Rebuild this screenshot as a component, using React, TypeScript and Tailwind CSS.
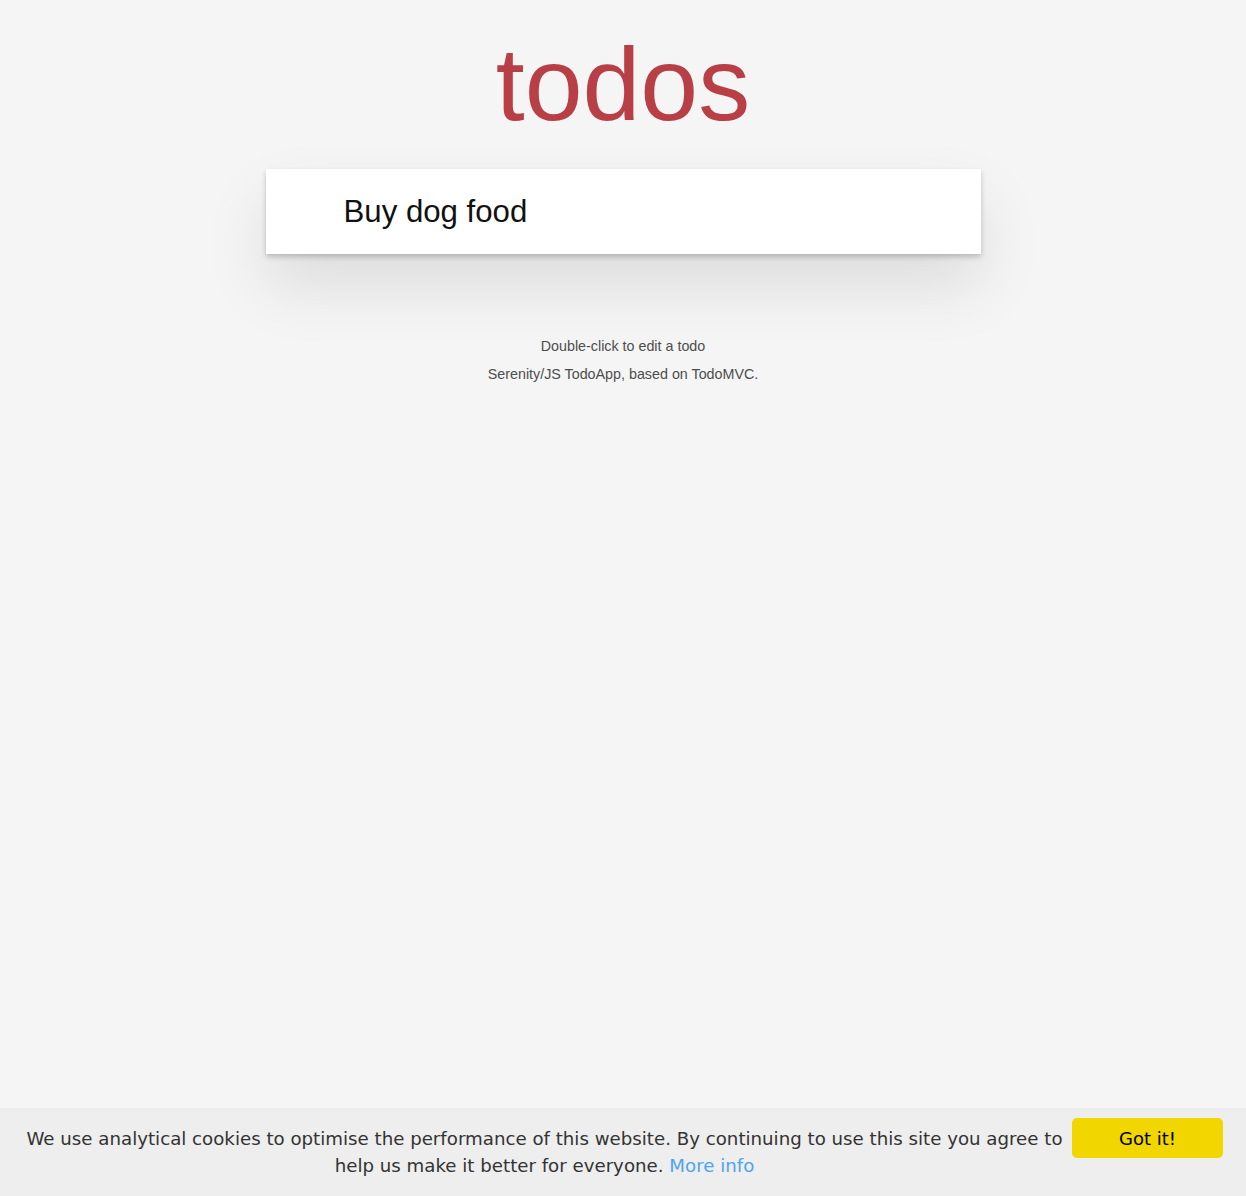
export default function App() {
  return (
    <div className="min-h-screen bg-[#f5f5f5] text-[#111111] font-['Liberation_Sans',Arial,sans-serif]">
      {/* Header */}
      <h1 className="pt-[32px] text-center text-[104px] leading-none font-normal text-[#b83f45]">todos</h1>

      {/* Todo app card */}
      <section className="mx-auto mt-[33px] w-[715px] bg-white shadow-[0_2.6px_5.2px_rgba(0,0,0,0.2),0_32px_65px_rgba(0,0,0,0.1)]">
        <input
          className="block w-full h-[85px] pl-[78px] pr-[21px] text-[31.2px] leading-[1.4] text-[#111111] bg-transparent outline-none"
          defaultValue="Buy dog food"
        />
      </section>

      {/* Info footer */}
      <footer className="mt-[85px] flex flex-col gap-[14px] text-center text-[14.3px] leading-none text-[#4d4d4d]">
        <p>Double-click to edit a todo</p>
        <p>Serenity/JS TodoApp, based on TodoMVC.</p>
      </footer>

      {/* Cookie banner */}
      <div className="fixed bottom-0 left-0 right-0 h-[88px] bg-[#eeeeee] flex items-start pl-[25px] pr-[23px] pt-[10px] font-['DejaVu_Sans',Verdana,sans-serif] text-[18.2px]">
        <span className="flex-1 text-center leading-[27px] text-[#333333] pt-[7px]">
          We use analytical cookies to optimise the performance of this website. By continuing to use this site you agree to help us make it better for everyone.{" "}
          <a className="text-[#4ea4ee]" href="#">More info</a>
        </span>
        <button className="ml-[8px] w-[151px] h-[40px] shrink-0 rounded-[5px] bg-[#f1d600] text-black text-[18px]">
          Got it!
        </button>
      </div>
    </div>
  );
}
